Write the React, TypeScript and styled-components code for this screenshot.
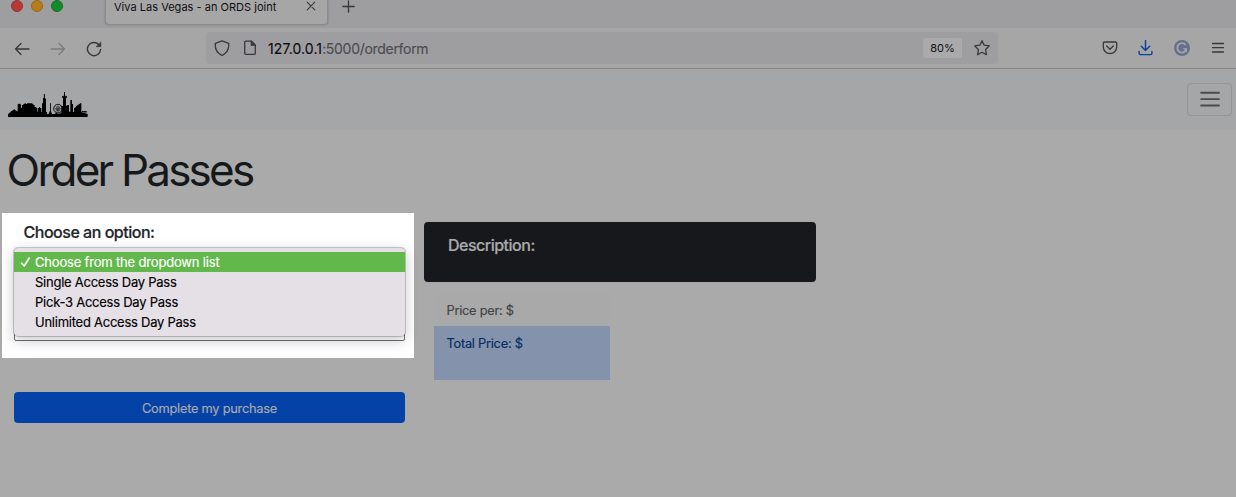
import React from "react";
import styled, { createGlobalStyle } from "styled-components";

const GlobalStyle = createGlobalStyle`
  *, *::before, *::after { box-sizing: border-box; }
  body {
    margin: 0;
    background: #aaaaaa;
    font-family: Inter, "Liberation Sans", sans-serif;
    overflow: hidden;
  }
  svg { display: block; flex: none; }
`;

const Window = styled.div`
  width: 1236px;
  height: 497px;
  display: flex;
  flex-direction: column;
  overflow: hidden;
  background: #aaaaaa;
`;

const TabStrip = styled.div`
  height: 28px;
  flex: none;
  display: flex;
  align-items: flex-start;
  background: #9e9ea0;
`;

const Lights = styled.div`
  display: flex;
  gap: 8px;
  width: 105px;
  padding-left: 11px;
`;

const Light = styled.span<{ $fill: string; $edge: string }>`
  width: 12px;
  height: 12px;
  border-radius: 50%;
  background: ${(p) => p.$fill};
  border: 1px solid ${(p) => p.$edge};
`;

const Tab = styled.div`
  width: 223px;
  height: 25px;
  display: flex;
  align-items: flex-start;
  justify-content: space-between;
  padding: 0 11px 0 8px;
  background: #a6a6a6;
  border: 1px solid #8b8b90;
  border-top: 0;
  border-radius: 0 0 4px 4px;
  box-shadow: 0 0 2px rgba(70, 70, 80, 0.45);
  svg { margin-top: 1px; }
`;

const TabTitle = styled.span`
  font-size: 11px;
  line-height: 14px;
  letter-spacing: 0.02px;
  color: #0e0e12;
  white-space: nowrap;
`;

const NewTab = styled.div`
  padding: 0 0 0 14px;
`;

const Toolbar = styled.div`
  height: 41px;
  flex: none;
  display: flex;
  align-items: center;
  background: #a6a6a6;
  border-bottom: 1px solid #858586;
`;

const NavButtons = styled.div`
  width: 206px;
  display: flex;
  gap: 20px;
  padding: 1px 0 0 14px;
`;

const AddressBar = styled.div`
  width: 792px;
  height: 32px;
  display: flex;
  align-items: center;
  padding: 0 7px 0 8px;
  border-radius: 4px;
  background: #9e9ea0;
`;

const PageSlot = styled.span`
  margin-left: 13px;
`;

const Url = styled.span`
  flex: 1;
  margin-left: 11px;
  padding-top: 1px;
  font-size: 14px;
  letter-spacing: -0.3px;
  color: #4d4d52;
  -webkit-text-stroke: 0.15px currentColor;
  b { font-weight: 400; color: #0e0e12; letter-spacing: 0.1px; }
`;

const Zoom = styled.span`
  width: 39px;
  height: 20px;
  margin-right: 11px;
  border-radius: 3px;
  background: #aaaaaa;
  color: #0e0e12;
  font-size: 11px;
  line-height: 20px;
  text-align: center;
`;

const Actions = styled.div`
  flex: 1;
  display: flex;
  align-items: center;
  justify-content: space-between;
  padding: 0 10px 0 104px;
`;

const SiteHeader = styled.header`
  height: 61px;
  flex: none;
  display: flex;
  align-items: center;
  justify-content: space-between;
  padding: 0 4px 0 8px;
  background: #a5a6a7;
`;

const Brand = styled.div`
  padding-top: 10px;
`;

const MenuToggle = styled.button`
  width: 45px;
  height: 33px;
  padding: 0 0 1px;
  display: flex;
  align-items: center;
  justify-content: center;
  border: 1px solid #949596;
  border-radius: 4px;
  background: transparent;
`;

const Title = styled.h1`
  height: 83px;
  flex: none;
  margin: 0;
  padding: 11px 0 0 6.6px;
  font-size: 44px;
  font-weight: 400;
  line-height: 58px;
  letter-spacing: -2.78px;
  color: #16191b;
  white-space: nowrap;
`;

const Columns = styled.main`
  display: flex;
  gap: 10px;
  padding-left: 2px;
`;

const OrderColumn = styled.section`
  width: 412px;
  display: flex;
  flex-direction: column;
`;

const OptionPanel = styled.div`
  height: 145px;
  padding: 8px 9px 0 12px;
  background: #ffffff;
`;

const OptionLabel = styled.div`
  height: 27px;
  padding-left: 9.5px;
  font-size: 16px;
  font-weight: 500;
  line-height: 23px;
  letter-spacing: -0.48px;
  color: #212529;
  -webkit-text-stroke: 0.2px #212529;
`;

const SelectBox = styled.div`
  position: relative;
  height: 93px;
  border: 1px solid #6b6b7b;
  border-radius: 4px 4px 2px 2px;
`;

const OptionMenu = styled.ul`
  position: absolute;
  top: -1px;
  left: -1px;
  right: -1px;
  height: 88px;
  margin: 0;
  padding: 4px 0;
  list-style: none;
  border-radius: 4px;
  background: #e5dfe6;
  box-shadow: 0 0 0 1px rgba(0, 0, 0, 0.2), 0 4px 14px 1px rgba(0, 0, 0, 0.2);
`;

const Option = styled.li<{ $selected?: boolean }>`
  height: 20px;
  display: flex;
  align-items: center;
  padding-left: ${(p) => (p.$selected ? 6 : 21)}px;
  gap: 4px;
  font-size: 13px;
  letter-spacing: ${(p) => (p.$selected ? -0.18 : -0.25)}px;
  white-space: nowrap;
  color: ${(p) => (p.$selected ? "#ffffff" : "#000000")};
  background: ${(p) => (p.$selected ? "#62b84b" : "transparent")};
  -webkit-text-stroke: 0.15px currentColor;
`;

const PurchaseButton = styled.button`
  height: 31px;
  margin: 34px 9px 0 12px;
  padding: 2px 0 0;
  border: 0;
  border-radius: 4px;
  background: #0542a8;
  color: #aaaaaa;
  font: 400 12.8px Inter, "Liberation Sans", sans-serif;
  letter-spacing: -0.24px;
  -webkit-text-stroke: 0.15px currentColor;
`;

const SummaryColumn = styled.section`
  width: 392px;
  padding-top: 9px;
`;

const Description = styled.div`
  height: 60px;
  padding: 12px 24px;
  border-radius: 4px;
  background: #16181b;
  color: #aaaaaa;
  font-size: 16px;
  font-weight: 500;
  line-height: 23px;
  letter-spacing: -0.5px;
  -webkit-text-stroke: 0.2px currentColor;
`;

const Prices = styled.div`
  width: 176px;
  margin: 12px 0 0 10px;
`;

const Price = styled.div<{ $total?: boolean }>`
  height: ${(p) => (p.$total ? 54 : 32)}px;
  padding: ${(p) => (p.$total ? 8 : 7)}px 12.5px 0;
  font-size: 12.8px;
  line-height: 19px;
  letter-spacing: -0.25px;
  color: ${(p) => (p.$total ? "#052c65" : "#424344")};
  background: ${(p) => (p.$total ? "#8493ab" : "#a9a9a9")};
  -webkit-text-stroke: 0.15px currentColor;
`;

const Stroke = {
  fill: "none",
  stroke: "#37373c",
  strokeWidth: 1.3,
  strokeLinecap: "round" as const,
  strokeLinejoin: "round" as const,
};

const CloseIcon = () => (
  <svg width="10" height="10" viewBox="0 0 10 10" {...Stroke} strokeWidth={1.1}>
    <path d="M1.2 1.2 8.8 8.8M8.8 1.2 1.2 8.8" />
  </svg>
);

const PlusIcon = () => (
  <svg width="13" height="13" viewBox="0 0 13 13" {...Stroke}>
    <path d="M6.5.8v11.4M.8 6.5h11.4" />
  </svg>
);

const ArrowIcon = ({ forward = false }: { forward?: boolean }) => (
  <svg width="16" height="16" viewBox="0 0 16 16" {...Stroke} stroke={forward ? "#7b7b7e" : "#37373c"}>
    {forward ? <path d="M1 8h13.5M9 2.5 14.5 8 9 13.5" /> : <path d="M15 8H1.5M7 2.5 1.5 8 7 13.5" />}
  </svg>
);

const ReloadIcon = () => (
  <svg width="16" height="16" viewBox="0 0 16 16" {...Stroke} strokeWidth={1.4}>
    <path d="M12.7 3.4A6.6 6.6 0 1 0 14.6 8.5" />
    <path d="M14.8 1.3v4.4h-4.4z" fill="#37373c" strokeWidth={0.6} />
  </svg>
);

const ShieldIcon = () => (
  <svg width="16" height="16" viewBox="0 0 16 16" {...Stroke}>
    <path d="M8 .9 14.7 3.3v2.5c0 3.8-2.5 7.5-6.7 9.700C3.800 13.300 1.300 9.600 1.300 5.800V3.300z" />
  </svg>
);

const PageIcon = () => (
  <svg width="14" height="16" viewBox="0 0 14 16" {...Stroke}>
    <path d="M2.7 1.2H8.3L12.3 5.2V13.3a1 1 0 0 1-1 1H2.7a1 1 0 0 1-1-1V2.2a1 1 0 0 1 1-1z" />
    <path d="M8.3 1.2V5.2H12.3z" fill="#37373c" />
  </svg>
);

const StarIcon = () => (
  <svg width="18" height="18" viewBox="0 0 18 18" {...Stroke}>
    <path d="M9 1.7 11.2 6.2 16.3 6.9 12.6 10.5 13.4 15.7 9 13.3 4.6 15.7 5.4 10.5 1.7 6.9 6.8 6.2z" />
  </svg>
);

const PocketIcon = () => (
  <svg width="16" height="14" viewBox="0 0 16 14" {...Stroke}>
    <path d="M2.5 1h11A1.2 1.2 0 0 1 14.7 2.2V6A6.7 6.7 0 0 1 1.3 6V2.2A1.2 1.2 0 0 1 2.5 1z" />
    <path d="M4.7 5 8 8.2 11.3 5" />
  </svg>
);

const DownloadIcon = () => (
  <svg width="16" height="16" viewBox="0 0 16 16" {...Stroke} stroke="#0742a0" strokeWidth={1.4}>
    <path d="M7.5.6v9.6M3.3 6.2 7.5 10.4 11.7 6.2M1.1 11.5v1.7A1.4 1.4 0 0 0 2.5 14.6H12.5a1.4 1.4 0 0 0 1.4-1.4V11.5" />
  </svg>
);

const GrammarIcon = () => (
  <svg width="16" height="16" viewBox="0 0 16 16">
    <circle cx="8" cy="8" r="8" fill="#6a6e88" />
    <path d="M11.6 4.8A4.7 4.7 0 1 0 12.2 10" fill="none" stroke="#a3a4ae" strokeWidth="1.8" />
    <path d="M8.500 8.200H13V12.500L11.300 10.600z" fill="#a3a4ae" />
  </svg>
);

const AppMenuIcon = () => (
  <svg width="16" height="14" viewBox="0 0 16 14" {...Stroke}>
    <path d="M2.5 2.500h11M2.5 6.700h11M2.5 11h11" />
  </svg>
);

const TogglerIcon = () => (
  <svg width="24" height="24" viewBox="0 0 24 24" {...Stroke} stroke="#4a4b4b" strokeWidth={1.9}>
    <path d="M3.200 5.700h17.800M3.200 12.100h17.800M3.200 18.500h17.800" />
  </svg>
);

const CheckIcon = () => (
  <svg width="11" height="12" viewBox="0 0 11 12" {...Stroke} stroke="#ffffff" strokeWidth={1.6}>
    <path d="M1.5 7 4.2 10 9.2 2" />
  </svg>
);

const Skyline = () => (
  <svg width="80" height="25" viewBox="24 36 240 75">
    <path d="M24 111V103L34 94 43 88 51 94H53V73H56V71H60V73H63V83H66V75H70V72H74V69H77V72H81V70H97V72H100V75H104V81H109V84H112V95H114V84H117V81H120V84H124V96H126V70H129V55L131.500 53V42H134.500V53L138 58V96H141V102H146L150 92V70H152.500V92L156 102H163L169 99 176 102 184 99V78H189V53H186V49H190L192 46V36H195V46L197 49H201V53H198V77H202V75H207V95H211V60H216V72H219V96H222V85L228 81V79L244 68V97H246V93H260V97L256 101H263V111Z" />
    <g fill="none" stroke="#000000">
      <circle cx="174" cy="86" r="13" strokeWidth="2.5" />
      <circle cx="174" cy="86" r="6" strokeWidth="1.5" />
      <path d="M174 73V99M161 86H187M165 77 183 95M183 77 165 95M174 86 168 103M174 86 180 103" strokeWidth="1" />
    </g>
    <path d="M247 97H258" stroke="#a5a6a7" strokeWidth="2" />
  </svg>
);

const passes = ["Single Access Day Pass", "Pick-3 Access Day Pass", "Unlimited Access Day Pass"];

export default function App() {
  return (
    <Window>
      <GlobalStyle />
      <TabStrip>
        <Lights>
          <Light $fill="#b53a36" $edge="#9b302d" />
          <Light $fill="#b37c1c" $edge="#99680f" />
          <Light $fill="#16892a" $edge="#0d7420" />
        </Lights>
        <Tab>
          <TabTitle>Viva Las Vegas - an ORDS joint</TabTitle>
          <CloseIcon />
        </Tab>
        <NewTab>
          <PlusIcon />
        </NewTab>
      </TabStrip>
      <Toolbar>
        <NavButtons>
          <ArrowIcon />
          <ArrowIcon forward />
          <ReloadIcon />
        </NavButtons>
        <AddressBar>
          <ShieldIcon />
          <PageSlot>
            <PageIcon />
          </PageSlot>
          <Url>
            <b>127.0.0.1</b>:5000/orderform
          </Url>
          <Zoom>80%</Zoom>
          <StarIcon />
        </AddressBar>
        <Actions>
          <PocketIcon />
          <DownloadIcon />
          <GrammarIcon />
          <AppMenuIcon />
        </Actions>
      </Toolbar>
      <SiteHeader>
        <Brand>
          <Skyline />
        </Brand>
        <MenuToggle aria-label="Toggle navigation">
          <TogglerIcon />
        </MenuToggle>
      </SiteHeader>
      <Title>Order Passes</Title>
      <Columns>
        <OrderColumn>
          <OptionPanel>
            <OptionLabel>Choose an option:</OptionLabel>
            <SelectBox>
              <OptionMenu>
                <Option $selected>
                  <CheckIcon />
                  Choose from the dropdown list
                </Option>
                {passes.map((pass) => (
                  <Option key={pass}>{pass}</Option>
                ))}
              </OptionMenu>
            </SelectBox>
          </OptionPanel>
          <PurchaseButton>Complete my purchase</PurchaseButton>
        </OrderColumn>
        <SummaryColumn>
          <Description>Description:</Description>
          <Prices>
            <Price>Price per: $</Price>
            <Price $total>Total Price: $</Price>
          </Prices>
        </SummaryColumn>
      </Columns>
    </Window>
  );
}
